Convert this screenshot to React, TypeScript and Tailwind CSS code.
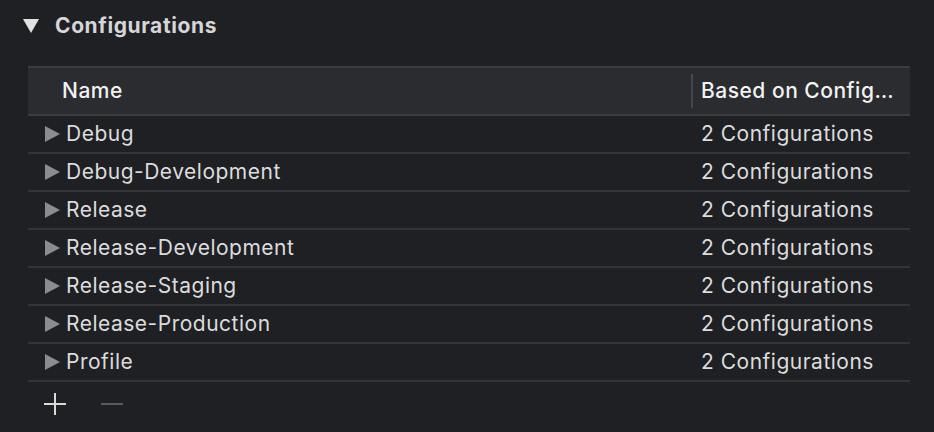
import { ChevronDown } from 'lucide-react';

const configs = [
  'Debug',
  'Debug-Development',
  'Release',
  'Release-Development',
  'Release-Staging',
  'Release-Production',
  'Profile',
];

function RightTriangle() {
  return (
    <svg width="15" height="16" viewBox="0 0 15 16" className="shrink-0">
      <polygon points="0,0 15,8 0,16" fill="#8c8c8e" />
    </svg>
  );
}

export default function App() {
  return (
    <div
      className="w-[934px] h-[432px] bg-[#1f2023] overflow-hidden text-[#dcdcdd]"
      style={{ fontFamily: 'Inter, "Liberation Sans", sans-serif' }}
    >
      <div className="flex items-center h-[52px] pl-[23px]">
        <svg width="16" height="14" viewBox="0 0 16 14" className="shrink-0">
          <polygon points="0,0 16,0 8,14" fill="#e2e2e3" />
        </svg>
        <span className="ml-[16px] text-[21px] font-bold text-[#d6d6d7] tracking-[0.6px]">Configurations</span>
      </div>

      <div className="ml-[28px] mt-[14px] w-[882px] text-[21px] tracking-[0.5px]">
        <div className="flex items-center h-[50px] bg-[#2b2c2f] border-t-2 border-b-2 border-[#3b3c3f]">
          <div className="w-[663px] pl-[34px] font-medium text-[#f2f2f2]">Name</div>
          <div className="w-[2px] h-[34px] bg-[#46474a]" />
          <div className="flex-1 pl-[8px] font-medium text-[#f2f2f2] truncate">Based on Config…</div>
        </div>
        {configs.map((c) => (
          <div key={c} className="flex items-center h-[38px] border-b-2 border-[#333437]">
            <div className="w-[665px] pl-[17px] flex items-center gap-[6px]">
              <RightTriangle />
              <span>{c}</span>
            </div>
            <div className="flex-1 pl-[8px]">2 Configurations</div>
          </div>
        ))}
      </div>

      <div className="flex items-center h-[44px] pl-[44px] gap-[35px]">
        <svg width="22" height="22" viewBox="0 0 22 22">
          <rect x="10" y="0" width="2" height="22" fill="#d9d9d9" />
          <rect x="0" y="10" width="22" height="2" fill="#d9d9d9" />
        </svg>
        <svg width="22" height="22" viewBox="0 0 22 22">
          <rect x="0" y="10" width="22" height="2" fill="#5a5a5c" />
        </svg>
      </div>
      <span className="hidden"><ChevronDown size={1} /></span>
    </div>
  );
}
